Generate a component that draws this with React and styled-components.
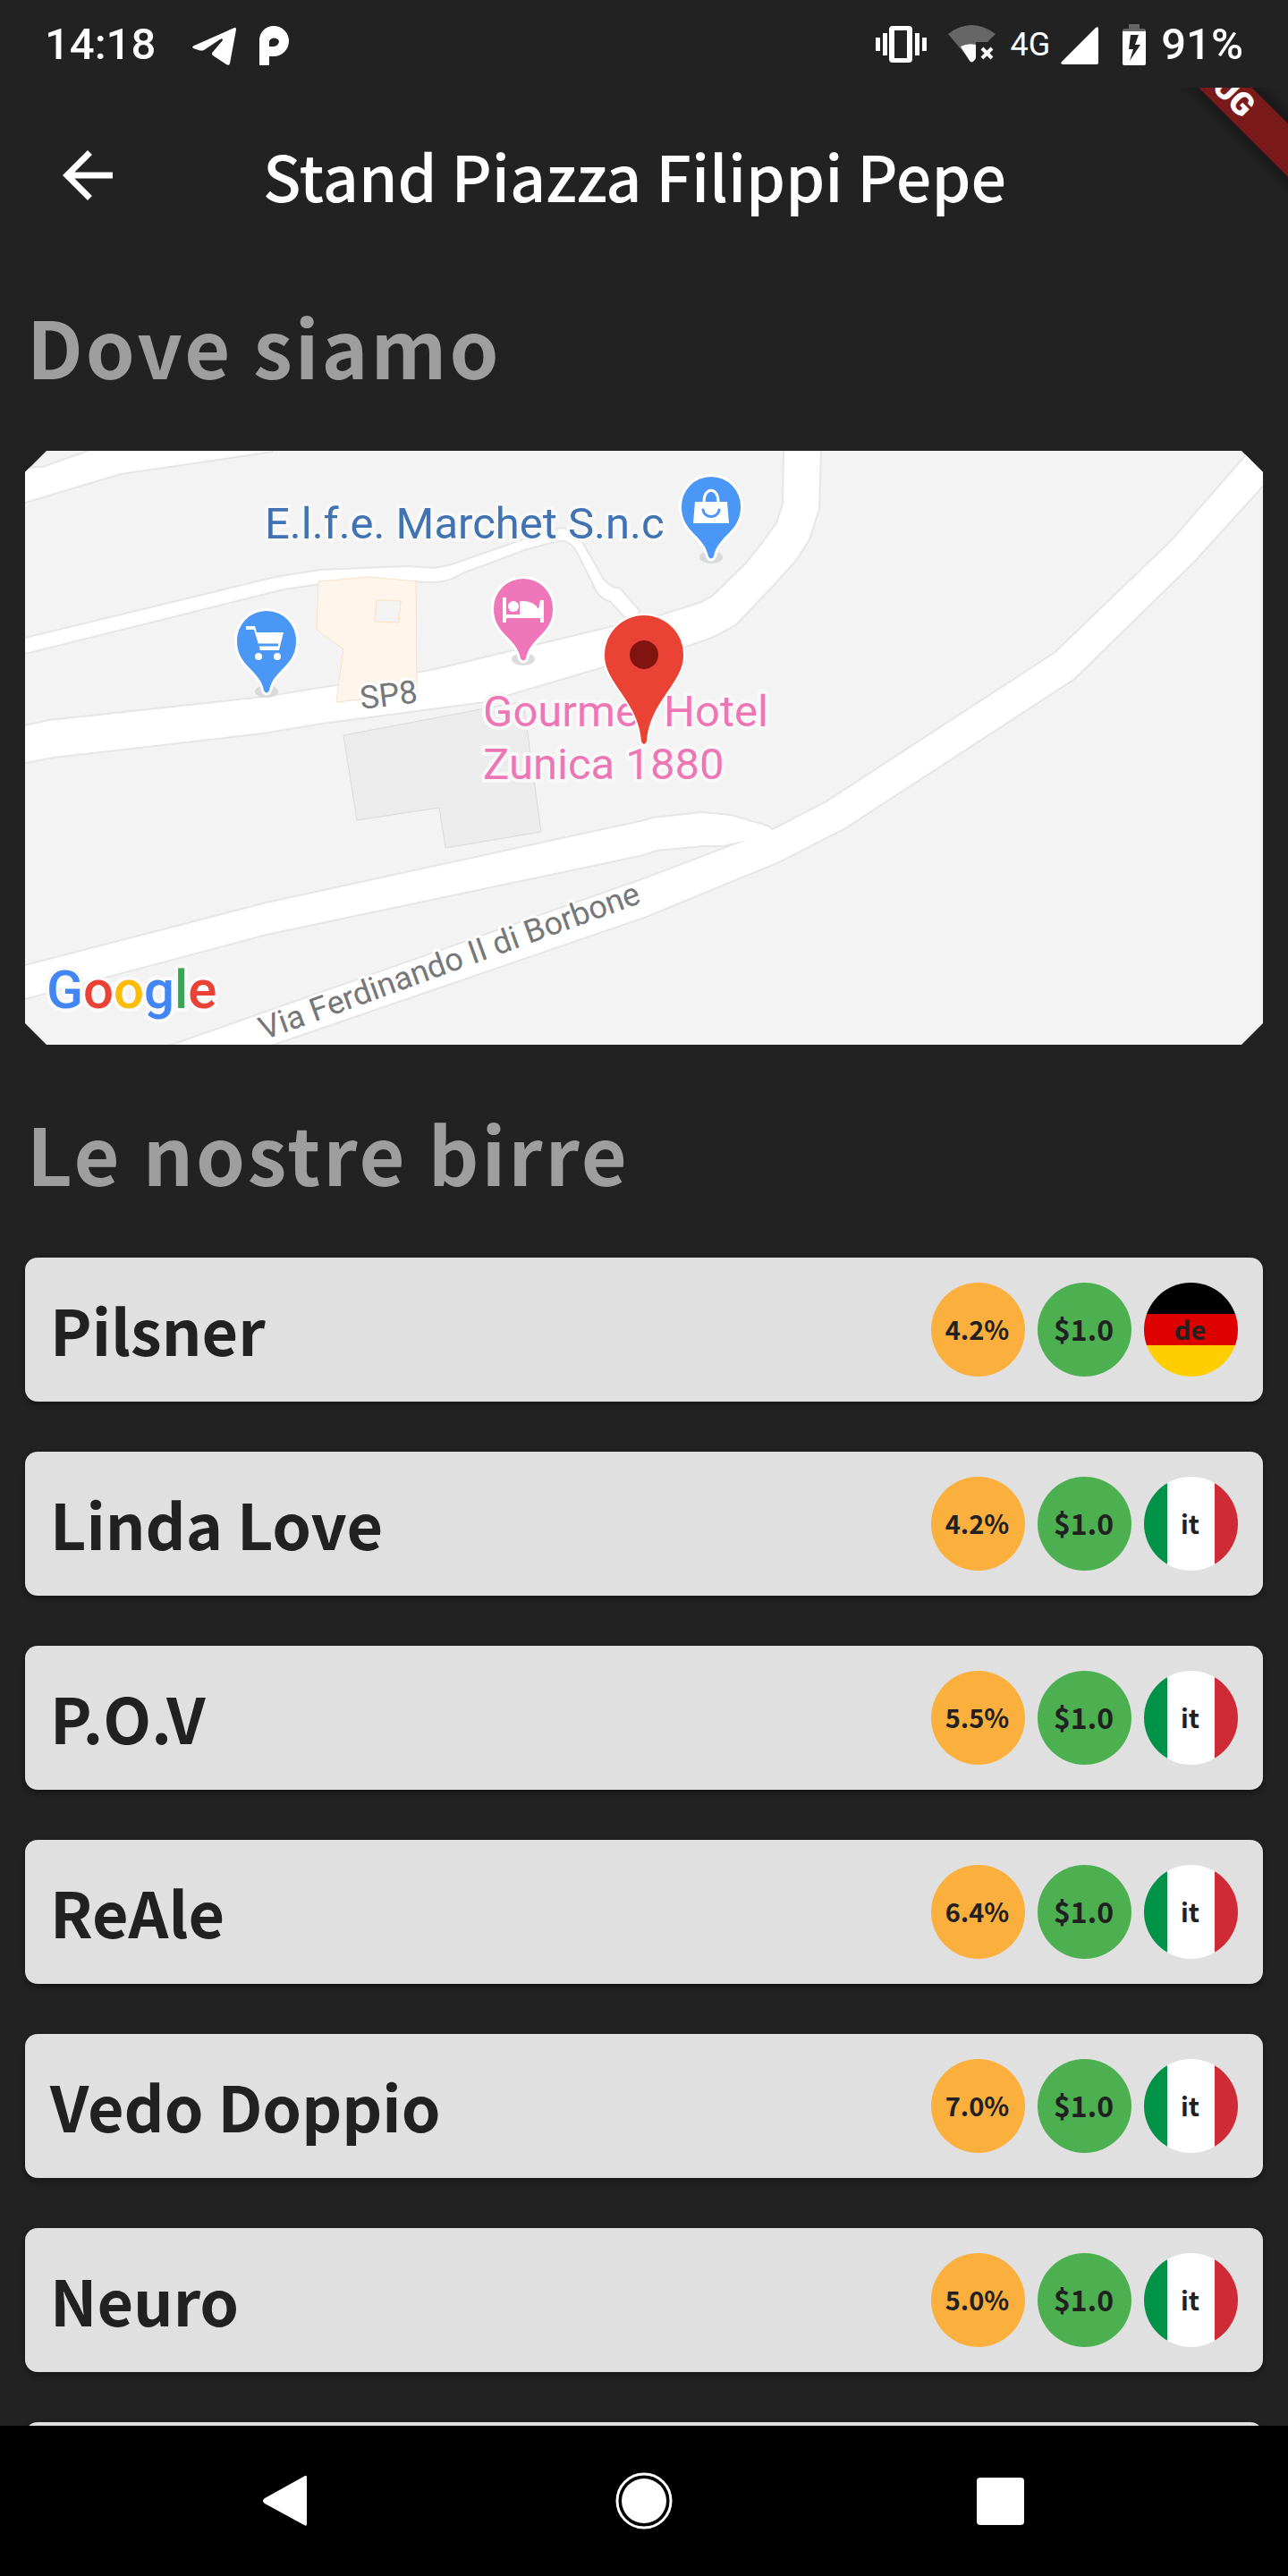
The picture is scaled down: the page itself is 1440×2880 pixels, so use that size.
import React from 'react'
import styled, { createGlobalStyle } from 'styled-components'

const beers = [
  { name: 'Pilsner', alcohol: '4.2%', price: '$1.0', country: 'de' },
  { name: 'Linda Love', alcohol: '4.2%', price: '$1.0', country: 'it' },
  { name: 'P.O.V', alcohol: '5.5%', price: '$1.0', country: 'it' },
  { name: 'ReAle', alcohol: '6.4%', price: '$1.0', country: 'it' },
  { name: 'Vedo Doppio', alcohol: '7.0%', price: '$1.0', country: 'it' },
  { name: 'Neuro', alcohol: '5.0%', price: '$1.0', country: 'it' },
]

const flags = {
  de: 'linear-gradient(to bottom, #000 0 35px, #dd0000 35px 70px, #ffce00 70px)',
  it: 'linear-gradient(to right, #009246 0 26px, #fff 26px 79px, #ce2b37 79px)',
}

// white carriageways, drawn twice: once for the edge, once for the fill
const roads = [
  'M20 19L73 0H277L107 25L0 57V20Z',
  'M0 210L280 142L330 134L427 130L459 132L477 128L580 92Q603 83 616 92L634 123L646 144Q654 154 664 154L686 179L680 195L655 168Q640 163 636 149L618 113Q610 98 596 100L561 109L489 136L475 143Q462 148 436 145L330 148L289 154L0 226Z',
  'M0 308L27 302L266 276L436 249L459 245L649 199L713 184L756 170L769 163L807 126L825 103L841 81L848 59L849 0H889L887 65L876 99L862 121L837 149L794 194L770 207L739 218L646 241L514 280L332 304L266 315L32 342L0 348Z',
  'M0 576L270 506L692 414L701 411L756 405L789 408L830 420L840 428L780 441L759 441L706 446L692 451L270 540L0 612Z',
  'M120 680L167 664L692 479L787 443L836 424L896 393L1152 226L1282 101L1365 6L1400 20L1384 38L1307 123L1172 255L917 421L843 459L692 521L275 664Z',
]

function PoiPin({ x, y, color, children }) {
  return (
    <g transform={`translate(${x} ${y})`}>
      <ellipse cx="0" cy="90" rx="13" ry="7" fill="#d2d4d4" opacity="0.8" />
      <path
        d="M0 0A33 33 0 0 0-33 34C-33 62-7 66-3 89Q0 94 3 89C7 66 33 62 33 34A33 33 0 0 0 0 0Z"
        fill={color}
        stroke="#fff"
        strokeWidth="6"
        paintOrder="stroke"
      />
      {children}
    </g>
  )
}

function StandMap() {
  return (
    <MapBox aria-label="Mappa">
      <MapSvg viewBox="0 0 1384 664">
        <rect width="1384" height="664" fill="#f3f3f3" />
        <g fill="none" stroke="#e6e6e6" strokeWidth="4">
          {roads.map((d) => <path key={d} d={d} />)}
        </g>
        <g fill="#fff">
          {roads.map((d) => <path key={d} d={d} />)}
        </g>
        <path d="M356 318L557 280L577 426L470 444L463 399L371 413Z" fill="#ececec" stroke="#dadada" strokeWidth="1" />
        <path d="M328 146L384 141L437 146L438 271L348 281L356 222L326 200Z" fill="#fff5eb" stroke="#fbe0c3" strokeWidth="1" />
        <path d="M393 167L420 168L418 192L391 191Z" fill="#f3f3f3" stroke="#fbe0c3" strokeWidth="1" />

        <RoadLabel transform="translate(376 289) rotate(-7)">SP8</RoadLabel>
        <RoadLabel transform="translate(267 659) rotate(-20)">Via Ferdinando II di Borbone</RoadLabel>
        <PlaceLabel x="268" y="98" fill="#4173b3">E.l.f.e. Marchet S.n.c</PlaceLabel>
        <PlaceLabel x="512" y="308" fill="#ee76b4">Gourmet Hotel</PlaceLabel>
        <PlaceLabel x="512" y="367" fill="#ee76b4">Zunica 1880</PlaceLabel>

        <PoiPin x="270" y="179" color="#4a97f5">
          <path d="M-23 17H-13L-11 24H19L14 44H-7L-14 21H-23Z" fill="#fff" />
          <path d="M-9 38H13" stroke="#4a97f5" strokeWidth="3" />
          <circle cx="-9" cy="51" r="4" fill="#fff" />
          <circle cx="12" cy="51" r="4" fill="#fff" />
        </PoiPin>
        <PoiPin x="557" y="143" color="#ee76b9">
          <path d="M-23 21H-19V40H-4V25Q12 24 17 34L19 24H23V49H19V44H-19V49H-23Z" fill="#fff" />
          <circle cx="-11" cy="31" r="6" fill="#fff" />
        </PoiPin>
        <PoiPin x="767" y="29" color="#4a97f5">
          <path d="M-18 28H18L20 52H-20Z" fill="#fff" />
          <path d="M-8 28C-8 11 8 11 8 28" fill="none" stroke="#fff" strokeWidth="3" />
          <path d="M-9 37C-8 47 8 47 9 37" fill="none" stroke="#4a97f5" strokeWidth="3" strokeLinecap="round" />
        </PoiPin>

        <path
          d="M692 184A44 44 0 0 0 648 229C648 260 686 280 689 325Q692 331 695 325C698 280 736 260 736 229A44 44 0 0 0 692 184Z"
          fill="#ea4335"
          stroke="#fff"
          strokeWidth="4"
          paintOrder="stroke"
        />
        <circle cx="692" cy="228" r="16" fill="#811411" />

        <Brand x="24" y="623">
          <tspan fill="#4285f4">G</tspan>
          <tspan fill="#ea4335">o</tspan>
          <tspan fill="#fbbc04">o</tspan>
          <tspan fill="#4285f4">g</tspan>
          <tspan fill="#34a853">l</tspan>
          <tspan fill="#ea4335">e</tspan>
        </Brand>
      </MapSvg>
    </MapBox>
  )
}

function StatusIcons() {
  return (
    <StatusGroup>
      <svg width="66" height="48" viewBox="981 25 66 48" fill="#fff">
        <path fillRule="evenodd" d="M1003 28H1021Q1025 28 1025 32V65Q1025 69 1021 69H1003Q999 69 999 65V32Q999 28 1003 28ZM1005 33V64H1019V33Z" />
        <path d="M984 41H989V56H984ZM992 36H997V61H992ZM1028 36H1033V61H1028ZM1036 41H1041V56H1036Z" />
      </svg>
      <svg width="63" height="48" viewBox="1059 25 63 48">
        <path d="M1065 37Q1091 17 1118 37L1109 46H1096V62L1091 68Z" fill="#666" />
        <path d="M1079 51Q1087 47 1096 49V64Q1092 71 1089 67Z" fill="#fff" />
        <path d="M1103 53L1114 64M1114 53L1103 64" stroke="#fff" strokeWidth="4" />
      </svg>
      <NetworkType>4G</NetworkType>
      <svg width="54" height="48" viewBox="1188 25 54 48">
        <path d="M1227 30Q1230 28 1230 31V69Q1230 71 1228 71H1190Q1187 70 1189 68Z" fill="#fff" />
      </svg>
      <svg width="34" height="48" viewBox="1254 25 34 48">
        <path d="M1264 26H1276V31H1281Q1283 31 1283 34H1257Q1257 31 1259 31H1264Z" fill="#666" />
        <path fillRule="evenodd" d="M1257 34H1283V70Q1283 72 1281 72H1259Q1257 72 1257 70ZM1266 38L1264 54H1269L1265 67L1277 49H1271L1275 38Z" fill="#fff" />
      </svg>
      <StatusText>91%</StatusText>
    </StatusGroup>
  )
}

function App() {
  return (
    <Screen>
      <GlobalStyle />
      <StatusBar>
        <StatusGroup>
          <StatusText>14:18</StatusText>
          <svg width="84" height="48" viewBox="184 25 84 48">
            <path d="M260 30Q262 29 262 32L255 70Q254 73 251 71L236 61Q234 59 236 57L247 44Q247 41 244 43L226 55Q223 56 220 55L214 53Q212 51 215 50Z" fill="#fff" />
          </svg>
          <svg width="48" height="48" viewBox="290 25 48 48">
            <path fillRule="evenodd" d="M298 72V45A16 16 0 0 1 314 28A17 17 0 0 1 314 62H309V72ZM309 51H314A6 6 0 0 0 320 45A6 6 0 0 0 309 45Z" fill="#fff" />
          </svg>
        </StatusGroup>
        <StatusIcons />
      </StatusBar>

      <AppBar>
        <BackButton aria-label="Indietro">
          <svg width="84" height="84" viewBox="0 0 24 24" fill="#fff">
            <path d="M20 11H7.83l5.59-5.59L12 4l-8 8 8 8 1.41-1.41L7.83 13H20v-2z" />
          </svg>
        </BackButton>
        <Title>Stand Piazza Filippi Pepe</Title>
        <Ribbon>DEBUG</Ribbon>
      </AppBar>

      <Content>
        <Heading>Dove siamo</Heading>
        <StandMap />
        <Heading>Le nostre birre</Heading>
        <BeerList>
          {beers.map((beer) => (
            <BeerCard key={beer.name}>
              <BeerName>{beer.name}</BeerName>
              <Badge $bg="#fbaf3c">{beer.alcohol}</Badge>
              <Badge $bg="#4caf50" $large>{beer.price}</Badge>
              <Badge $bg={flags[beer.country]}>{beer.country}</Badge>
            </BeerCard>
          ))}
          <BeerCard />
        </BeerList>
      </Content>

      <NavBar>
        <NavButton aria-label="Indietro">
          <svg width="64" height="64" viewBox="0 0 64 64" fill="#fff">
            <path d="M52 4Q54 3 54 6V58Q54 61 51 59L7 35Q3 32 7 29Z" />
          </svg>
        </NavButton>
        <NavButton aria-label="Home">
          <svg width="64" height="64" viewBox="0 0 64 64">
            <circle cx="32" cy="32" r="30" fill="none" stroke="#fff" strokeWidth="3" />
            <circle cx="32" cy="32" r="25" fill="#fff" />
          </svg>
        </NavButton>
        <NavButton aria-label="Recenti">
          <svg width="64" height="64" viewBox="0 0 64 64">
            <rect x="5" y="6" width="53" height="53" rx="4" fill="#fff" />
          </svg>
        </NavButton>
      </NavBar>
    </Screen>
  )
}

const GlobalStyle = createGlobalStyle`
  * {
    box-sizing: border-box;
  }
  body {
    margin: 0;
    background: #222;
  }
`

const Screen = styled.div`
  display: flex;
  flex-direction: column;
  height: 100vh;
  background: #222;
  color: #fff;
  font-family: 'Noto Sans CJK JP', 'Noto Sans', sans-serif;
`

const StatusBar = styled.div`
  display: flex;
  align-items: center;
  justify-content: space-between;
  flex: none;
  height: 98px;
  padding: 2px 50px 0;
  font-family: Roboto, sans-serif;
`

const StatusGroup = styled.div`
  display: flex;
  align-items: center;
  gap: 12px;
`

const StatusText = styled.span`
  font-size: 49px;
  font-weight: 500;
  line-height: 56px;
`

const NetworkType = styled.span`
  font-size: 36px;
  line-height: 56px;
`

const AppBar = styled.header`
  position: relative;
  display: flex;
  align-items: center;
  flex: none;
  height: 196px;
  overflow: hidden;
`

const BackButton = styled.button`
  display: flex;
  align-items: center;
  justify-content: center;
  width: 196px;
  height: 196px;
  padding: 0;
  border: 0;
  background: none;
`

const Title = styled.h1`
  margin: 0;
  padding-left: 98px;
  font-size: 70px;
  font-weight: 500;
  line-height: 104px;
`

const Ribbon = styled.span`
  position: absolute;
  top: -35px;
  right: -116px;
  width: 400px;
  height: 42px;
  background: #7b1a1a;
  box-shadow: 0 0 21px rgba(0, 0, 0, 0.5);
  font-family: Roboto, sans-serif;
  font-size: 36px;
  font-weight: 900;
  line-height: 42px;
  text-align: center;
  transform: rotate(45deg);
`

const Content = styled.main`
  flex: 1;
  min-height: 0;
  overflow: hidden;
  padding: 0 28px;
`

const Heading = styled.h2`
  margin: 0;
  padding: 26px 2px 52px;
  color: #9e9e9e;
  font-size: 88px;
  font-weight: 700;
  line-height: 132px;
  letter-spacing: 3px;
`

const MapBox = styled.section`
  margin-bottom: 28px;
  clip-path: polygon(
    24px 0, calc(100% - 24px) 0, 100% 24px, 100% calc(100% - 24px),
    calc(100% - 24px) 100%, 24px 100%, 0 calc(100% - 24px), 0 24px
  );
`

const MapSvg = styled.svg`
  display: block;
  width: 100%;
  height: auto;
  font-family: Roboto, sans-serif;
`

const PlaceLabel = styled.text`
  font-size: 49px;
  stroke: #f8f8f8;
  stroke-width: 8px;
  stroke-linejoin: round;
  paint-order: stroke;
`

const RoadLabel = styled.text`
  fill: #757779;
  font-size: 36px;
  stroke: #fff;
  stroke-width: 6px;
  stroke-linejoin: round;
  paint-order: stroke;
`

const Brand = styled.text`
  font-size: 60px;
  font-weight: 500;
  stroke: #fafafa;
  stroke-width: 8px;
  stroke-linejoin: round;
  paint-order: stroke;
`

const BeerList = styled.ul`
  display: flex;
  flex-direction: column;
  gap: 56px;
  margin: 0;
  padding: 0;
  list-style: none;
`

const BeerCard = styled.li`
  display: flex;
  align-items: center;
  gap: 14px;
  min-height: 161px;
  padding: 28px;
  border-radius: 14px;
  background: #e0e0e0;
  box-shadow: 0 3px 6px rgba(0, 0, 0, 0.4);
  color: #212121;
`

const BeerName = styled.span`
  flex: 1;
  padding-bottom: 2px;
  font-size: 70px;
  font-weight: 700;
  line-height: 102px;
`

const Badge = styled.span`
  display: flex;
  align-items: center;
  justify-content: center;
  width: 105px;
  height: 105px;
  padding: 0 2px 3px 0;
  border-radius: 50%;
  background: ${(props) => props.$bg};
  font-size: ${(props) => (props.$large ? '32px' : '29px')};
  font-weight: 700;
`

const NavBar = styled.nav`
  display: flex;
  align-items: center;
  justify-content: center;
  gap: 335px;
  flex: none;
  height: 168px;
  background: #000;
`

const NavButton = styled.button`
  display: flex;
  padding: 0;
  border: 0;
  background: none;
`

export default App
